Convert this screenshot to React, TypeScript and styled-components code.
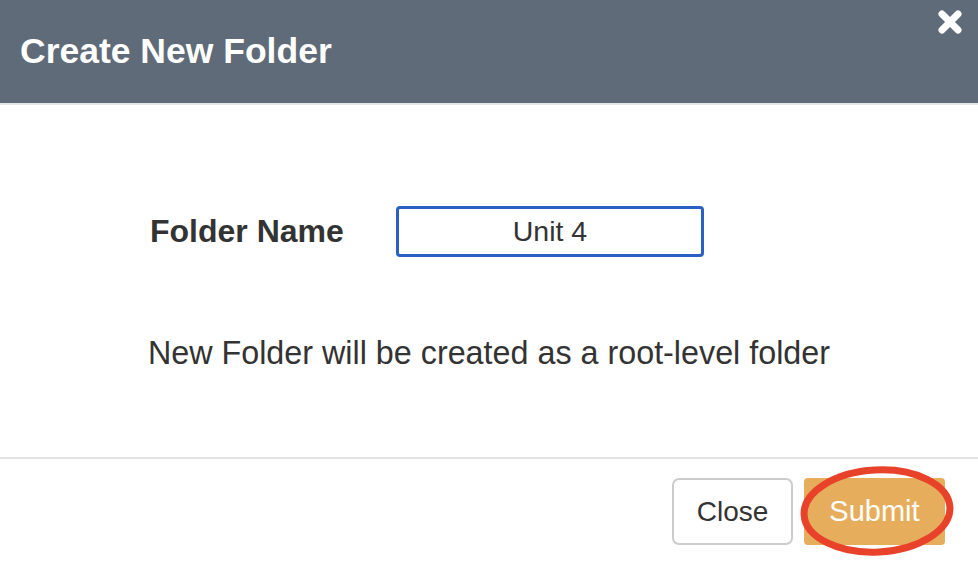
import React from 'react'
import styled, { createGlobalStyle } from 'styled-components'

const GlobalStyle = createGlobalStyle`
    html, body {
        margin: 0;
        padding: 0;
        background: #ffffff;
    }
    body {
        font-family: "Liberation Sans", Arial, sans-serif;
        color: #333333;
    }
`

const Modal = styled.div`
    width: 978px;
    height: 562px;
    display: flex;
    flex-direction: column;
    background: #ffffff;
    overflow: hidden;
`

const Header = styled.div`
    height: 103px;
    flex-shrink: 0;
    background-color: #5f6b79;
    border-bottom: 2px solid #e4e6e8;
    display: flex;
    align-items: center;
    padding-left: 20px;
    position: relative;
`

const Title = styled.h2`
    margin: 0;
    color: #ffffff;
    font-size: 35.5px;
    font-weight: 700;
`

const CloseIcon = styled.button`
    position: absolute;
    top: 8px;
    right: 14px;
    width: 28px;
    height: 28px;
    padding: 0;
    border: none;
    background: transparent;
    cursor: pointer;
    display: flex;
    align-items: center;
    justify-content: center;
`

const Body = styled.div`
    flex: 1;
    display: flex;
    flex-direction: column;
    padding-top: 101px;
`

const FieldRow = styled.div`
    display: flex;
    align-items: center;
    padding-left: 150px;
`

const Label = styled.label`
    width: 246px;
    font-size: 32px;
    font-weight: 700;
    color: #333333;
`

const Input = styled.input`
    box-sizing: border-box;
    width: 308px;
    height: 51px;
    border: 3px solid #2a5fc4;
    border-radius: 4px;
    text-align: center;
    font-family: "Liberation Sans", Arial, sans-serif;
    font-size: 28.5px;
    color: #333333;
    outline: none;
    padding: 0 10px;
`

const Note = styled.p`
    margin: 78px 0 0;
    text-align: center;
    font-size: 32.3px;
    color: #333333;
`

const Footer = styled.div`
    height: 105px;
    flex-shrink: 0;
    border-top: 2px solid #e4e4e4;
    display: flex;
    justify-content: flex-end;
    align-items: flex-start;
    padding: 19px 33px 0 0;
    gap: 11px;
    box-sizing: border-box;
`

const Button = styled.button<{ primary?: boolean }>`
    box-sizing: border-box;
    height: 67px;
    padding: 0;
    width: ${p => (p.primary ? '141px' : '121px')};
    font-family: "Liberation Sans", Arial, sans-serif;
    font-size: ${p => (p.primary ? '29px' : '28px')};
    border-radius: ${p => (p.primary ? '4px' : '7px')};
    border: ${p => (p.primary ? '2px solid #e6ae5c' : '2px solid #cccccc')};
    background: ${p => (p.primary ? '#e6ae5c' : '#ffffff')};
    color: ${p => (p.primary ? '#ffffff' : '#333333')};
    cursor: pointer;
`

const SubmitWrap = styled.div`
    position: relative;
    display: flex;
`

const Highlight = styled.svg`
    position: absolute;
    left: -6px;
    top: -14px;
    pointer-events: none;
`

export default function App() {
    return (
        <>
            <GlobalStyle />
            <Modal>
                <Header>
                    <Title>Create New Folder</Title>
                    <CloseIcon aria-label="close">
                        <svg width="26" height="26" viewBox="0 0 26 26">
                            <path
                                d="M5 5 L21 21 M21 5 L5 21"
                                stroke="#ffffff"
                                strokeWidth="7"
                                strokeLinecap="round"
                            />
                        </svg>
                    </CloseIcon>
                </Header>
                <Body>
                    <FieldRow>
                        <Label>Folder Name</Label>
                        <Input defaultValue="Unit 4" />
                    </FieldRow>
                    <Note>New Folder will be created as a root-level folder</Note>
                </Body>
                <Footer>
                    <Button>Close</Button>
                    <SubmitWrap>
                        <Button primary>Submit</Button>
                        <Highlight width="158" height="94" viewBox="0 0 158 94">
                            <ellipse
                                cx="79"
                                cy="47"
                                rx="73"
                                ry="41"
                                fill="none"
                                stroke="#e8432a"
                                strokeWidth="7"
                                transform="rotate(-3 79 47)"
                            />
                        </Highlight>
                    </SubmitWrap>
                </Footer>
            </Modal>
        </>
    )
}
